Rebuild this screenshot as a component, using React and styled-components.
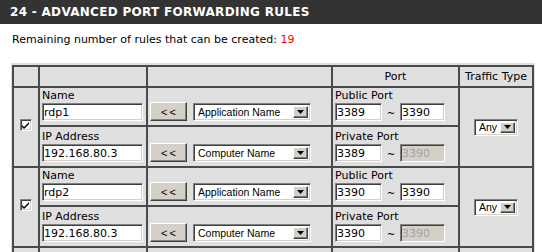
import React from 'react';
import styled, { createGlobalStyle } from 'styled-components';

const GlobalStyle = createGlobalStyle`
    body {
        margin: 0;
        background: #ffffff;
        font-family: "DejaVu Sans", Verdana, sans-serif;
        overflow: hidden;
    }
`;

const Page = styled.div`
    width: 542px;
    height: 252px;
    overflow: hidden;
`;

const TitleBar = styled.div`
    height: 24px;
    line-height: 25px;
    padding-left: 10px;
    background-color: #333333;
    color: #ffffff;
    font-size: 12px;
    font-weight: bold;
    letter-spacing: 0.3px;
    white-space: nowrap;
`;

const Remaining = styled.div`
    margin-top: 9px;
    padding-left: 12px;
    font-size: 11px;
    line-height: 14px;
    color: #000000;
`;

const Count = styled.span`
    color: #ff0000;
`;

const RulesGrid = styled.div`
    display: grid;
    width: max-content;
    grid-template-columns: 26px 108px 185px 127px 76px;
    grid-template-rows: 21px repeat(3, 39px 41px);
    margin: 16px 0 0 11px;
    padding: 2px 1px 0 1px;
    background-color: #dfdfdf;
`;

const Cell = styled.div`
    grid-row: span ${(p) => p.$rows || 1};
    display: flex;
    flex-direction: column;
    justify-content: ${(p) => (p.$center ? 'center' : 'flex-end')};
    align-items: ${(p) => (p.$center ? 'center' : 'stretch')};
    padding: ${(p) => (p.$center ? '0' : '0 2px 4px 2px')};
    border-top: 2px solid #4a4a4a;
    border-left: 2px solid #4a4a4a;
    border-right: ${(p) => (p.$last ? '2px solid #4a4a4a' : 'none')};
    font-size: 11px;
    color: #000000;
    min-width: 0;
`;

const HeadCell = styled(Cell)`
    justify-content: center;
    align-items: center;
    padding: 0;
    line-height: 14px;
    white-space: nowrap;
`;

const Label = styled.div`
    line-height: 13px;
    margin-bottom: 1px;
    white-space: nowrap;
`;

const Line = styled.div`
    display: flex;
    align-items: flex-end;
    gap: ${(p) => p.$gap || 0}px;
`;

const TextInput = styled.input`
    box-sizing: border-box;
    width: ${(p) => p.$width}px;
    height: 18px;
    margin: 0;
    padding: 0 0 0 1px;
    border: 1px solid;
    border-color: #808080 #ffffff #ffffff #808080;
    box-shadow: inset 1px 1px #404040, inset -1px -1px #d4d0c8;
    background-color: ${(p) => (p.disabled ? '#d4d0c8' : '#ffffff')};
    color: ${(p) => (p.disabled ? '#a0a0a0' : '#000000')};
    font-family: "DejaVu Sans", Verdana, sans-serif;
    font-size: 11px;
    outline: none;
    -webkit-text-fill-color: ${(p) => (p.disabled ? '#a0a0a0' : '#000000')};
    opacity: 1;
`;

const Tilde = styled.span`
    width: 18px;
    text-align: center;
    line-height: 15px;
    font-size: 10px;
`;

const PickButton = styled.button`
    box-sizing: border-box;
    width: 37px;
    height: 19px;
    margin: 0;
    padding: 0;
    border: 1px solid;
    border-color: #ffffff #404040 #404040 #ffffff;
    box-shadow: inset -1px -1px #808080;
    background-color: #d4d0c8;
    color: #000000;
    font-family: "Liberation Sans", Arial, sans-serif;
    font-size: 11px;
    letter-spacing: 2px;
    text-indent: 2px;
`;

const SelectBox = styled.div`
    box-sizing: border-box;
    display: flex;
    align-items: center;
    width: ${(p) => p.$width}px;
    height: ${(p) => p.$height || 18}px;
    border: 1px solid;
    border-color: #808080 #ffffff #ffffff #808080;
    box-shadow: inset 1px 1px #404040, inset -1px -1px #d4d0c8;
    background-color: #ffffff;
    padding: 2px 2px 2px 4px;
    font-family: "Liberation Sans", Arial, sans-serif;
    font-size: 10.5px;
    white-space: nowrap;
`;

const SelectText = styled.span`
    flex: 1;
    overflow: hidden;
`;

const DropArrow = styled.span`
    box-sizing: border-box;
    display: flex;
    align-items: center;
    justify-content: center;
    width: 15px;
    height: 100%;
    border: 1px solid;
    border-color: #ffffff #404040 #404040 #ffffff;
    box-shadow: inset -1px -1px #808080;
    background-color: #d4d0c8;
`;

const CheckBox = styled.span`
    box-sizing: border-box;
    display: flex;
    align-items: center;
    justify-content: center;
    width: 12px;
    height: 12px;
    margin-top: -4px;
    margin-left: -1px;
    border: 1px solid;
    border-color: #808080 #ffffff #ffffff #808080;
    box-shadow: inset 1px 1px #404040, inset -1px -1px #d4d0c8;
    background-color: #ffffff;
`;

const Select = ({ value, width, height }) => (
    <SelectBox $width={width} $height={height}>
        <SelectText>{value}</SelectText>
        <DropArrow>
            <svg width="7" height="4" viewBox="0 0 7 4">
                <path d="M0 0h7L3.5 4z" fill="#000" />
            </svg>
        </DropArrow>
    </SelectBox>
);

const rules = [
    { checked: true, name: 'rdp1', ip: '192.168.80.3', pub: ['3389', '3390'], priv: ['3389', '3390'] },
    { checked: true, name: 'rdp2', ip: '192.168.80.3', pub: ['3390', '3390'], priv: ['3390', '3390'] },
];

const PortPair = ({ label, values, locked }) => (
    <Cell>
        <Label>{label}</Label>
        <Line>
            <TextInput $width={47} value={values[0]} readOnly />
            <Tilde>~</Tilde>
            <TextInput $width={45} value={values[1]} readOnly disabled={locked} />
        </Line>
    </Cell>
);

const RuleRows = ({ rule }) => (
    <>
        <Cell $rows={2} $center>
            <CheckBox>
                {rule.checked && (
                    <svg width="7" height="7" viewBox="0 0 7 7">
                        <path d="M0 3l2 2 5-5v2l-5 5-2-2z" fill="#000" />
                    </svg>
                )}
            </CheckBox>
        </Cell>
        <Cell>
            <Label>Name</Label>
            <TextInput $width={101} value={rule.name} readOnly />
        </Cell>
        <Cell>
            <Line $gap={6}>
                <PickButton>&lt;&lt;</PickButton>
                <Select value="Application Name" width={118} />
            </Line>
        </Cell>
        <PortPair label="Public Port" values={rule.pub} />
        <Cell $rows={2} $center $last>
            <Select value="Any" width={44} height={17} />
        </Cell>
        <Cell>
            <Label>IP Address</Label>
            <TextInput $width={101} value={rule.ip} readOnly />
        </Cell>
        <Cell>
            <Line $gap={6}>
                <PickButton>&lt;&lt;</PickButton>
                <Select value="Computer Name" width={118} />
            </Line>
        </Cell>
        <PortPair label="Private Port" values={rule.priv} locked />
    </>
);

// the next rule only shows its top border at the bottom edge of the frame
const NextRuleEdge = () => (
    <>
        <Cell $rows={2} />
        <Cell />
        <Cell />
        <Cell />
        <Cell $rows={2} $last />
    </>
);

const App = () => {
    return (
        <>
            <GlobalStyle />
            <Page>
                <TitleBar>24 - ADVANCED PORT FORWARDING RULES</TitleBar>
                <Remaining>
                    Remaining number of rules that can be created: <Count>19</Count>
                </Remaining>
                <RulesGrid>
                    <HeadCell></HeadCell>
                    <HeadCell></HeadCell>
                    <HeadCell></HeadCell>
                    <HeadCell>Port</HeadCell>
                    <HeadCell $last>Traffic Type</HeadCell>
                    {rules.map((rule, i) => (
                        <RuleRows key={i} rule={rule} />
                    ))}
                    <NextRuleEdge />
                </RulesGrid>
            </Page>
        </>
    );
};

export default App;
